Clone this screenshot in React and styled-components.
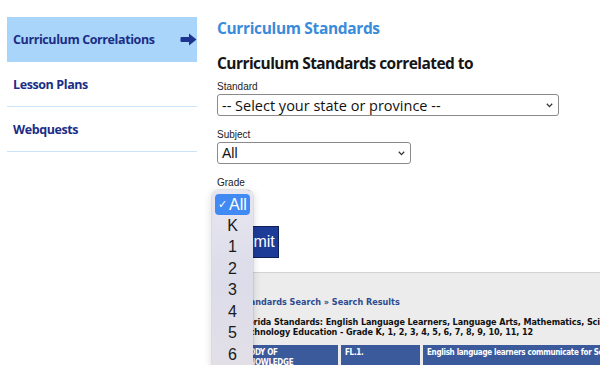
import React from 'react'
import styled, { createGlobalStyle } from 'styled-components'

const GlobalStyle = createGlobalStyle`
  html, body {
    margin: 0;
    padding: 0;
    background: #fff;
    overflow: hidden;
  }
  body {
    font-family: "Open Sans", "Liberation Sans", sans-serif;
    width: 600px;
    height: 365px;
  }
`

const Page = styled.div`
  display: flex;
  align-items: flex-start;
  width: 600px;
  height: 365px;
  overflow: hidden;
`

const Sidebar = styled.nav`
  width: 190px;
  flex: none;
  margin: 17px 0 0 7px;
  display: flex;
  flex-direction: column;
`

const NavItem = styled.a`
  display: flex;
  align-items: center;
  justify-content: space-between;
  height: ${p => (p.active ? '45px' : '44px')};
  padding: 0 0 0 6px;
  background: ${p => (p.active ? '#a9d5fb' : 'transparent')};
  border-bottom: ${p => (p.active ? 'none' : '1px solid #c8e3fa')};
  color: #1b2d86;
  font-weight: 700;
  font-size: 12.5px;
  letter-spacing: -0.4px;
  text-decoration: none;
  svg {
    flex: none;
  }
`

const Arrow = () => (
  <svg width="17" height="13" viewBox="0 0 17 13">
    <path d="M1.5 4 H9 V0.5 L16.5 6.5 L9 12.5 V9 H1.5 Q0.5 9 0.5 8 V5 Q0.5 4 1.5 4 Z" fill="#1b3590" />
  </svg>
)

const Main = styled.main`
  flex: none;
  width: 520px;
  margin-left: 20px;
  padding-top: 17px;
  display: flex;
  flex-direction: column;
`

const Title = styled.h1`
  margin: 0;
  color: #3a8bd9;
  font-size: 15.5px;
  letter-spacing: -0.35px;
  font-weight: 700;
  line-height: 22px;
`

const Subtitle = styled.h2`
  margin: 13px 0 0;
  color: #161616;
  font-size: 15.5px;
  letter-spacing: -0.55px;
  font-weight: 700;
  line-height: 22px;
`

const Field = styled.div`
  position: relative;
  display: flex;
  flex-direction: column;
  align-items: flex-start;
  margin-top: ${p => p.gap || 9}px;
`

const Label = styled.label`
  font-family: "Liberation Sans", Arial, sans-serif;
  font-size: 10px;
  line-height: 12px;
  color: #222;
  margin-bottom: 1px;
`

const SelectBox = styled.div`
  position: relative;
  width: ${p => p.width}px;
  height: 22px;
  box-sizing: border-box;
  border: 1px solid #8a8a8a;
  border-radius: 3px;
  background: #fff;
  display: flex;
  align-items: center;
  padding-left: 4px;
  font-family: ${p => (p.sans ? '"Liberation Sans", Arial' : '"Open Sans"')}, sans-serif;
  font-size: ${p => (p.sans ? '14px' : '14.5px')};
  color: #111;
  svg {
    position: absolute;
    right: 5px;
    top: 8px;
  }
`

const Chevron = () => (
  <svg width="7" height="5" viewBox="0 0 7 5">
    <path d="M0.8 0.8 L3.5 3.6 L6.2 0.8" fill="none" stroke="#333" strokeWidth="1.3" />
  </svg>
)

const Popup = styled.ul`
  position: absolute;
  left: -5px;
  top: 13px;
  width: 41px;
  height: 200px;
  margin: 0;
  padding: 4px 3px;
  box-sizing: border-box;
  list-style: none;
  border-radius: 6px;
  background: linear-gradient(180deg, #e7e6ef 0%, #dcdcea 45%, #e4e0e6 100%);
  box-shadow: 0 2px 8px rgba(0, 0, 0, 0.18), 0 0 0 0.5px rgba(0, 0, 0, 0.12);
  z-index: 5;
  font-family: "Liberation Sans", Arial, sans-serif;
  font-size: 16px;
  color: #1a1a1a;
`

const Option = styled.li`
  height: ${p => (p.selected ? '21px' : '21.5px')};
  display: flex;
  align-items: center;
  justify-content: center;
  border-radius: 4px;
  background: ${p => (p.selected ? '#418af3' : 'transparent')};
  color: ${p => (p.selected ? '#fff' : '#1a1a1a')};
  span {
    font-size: 11px;
    margin-right: 2px;
  }
`

const Submit = styled.button`
  margin-top: 14px;
  width: 61px;
  height: 32px;
  background: #1d3c98;
  border: 1px solid #0e1f5a;
  color: #fff;
  font-family: "Liberation Sans", Arial, sans-serif;
  font-size: 16px;
  align-self: flex-start;
  margin-left: 1px;
`

const Results = styled.section`
  margin-top: 14px;
  border-top: 1px solid #d3d3d3;
  background: #ececec;
  padding: 24px 0 0 23px;
  height: 200px;
  font-family: "DejaVu Sans Condensed", "DejaVu Sans", sans-serif;
  font-weight: 700;
`

const Crumb = styled.div`
  font-size: 9px;
  color: #2d4b8f;
  line-height: 11px;
`

const Heading = styled.div`
  margin-top: 9px;
  font-size: 9px;
  letter-spacing: -0.1px;
  line-height: 10px;
  color: #111;
  span {
    display: block;
    white-space: nowrap;
  }
`

const Table = styled.table`
  margin-top: 8px;
  margin-left: -3px;
  width: 640px;
  table-layout: fixed;
  border-spacing: 3px 0;
  font-size: 8px;
  letter-spacing: -0.3px;
  color: #fff;
`

const Cell = styled.td`
  box-sizing: border-box;
  width: ${p => (p.width ? `${p.width}px` : 'auto')};
  background: #3b5a9c;
  vertical-align: top;
  padding: 3px 4px;
  line-height: 10px;
`

export default function App() {
  const grades = ['K', '1', '2', '3', '4', '5', '6', '7', '8']
  return (
    <Page>
      <GlobalStyle />
      <Sidebar>
        <NavItem active href="#">
          Curriculum Correlations
          <Arrow />
        </NavItem>
        <NavItem href="#">Lesson Plans</NavItem>
        <NavItem href="#">Webquests</NavItem>
      </Sidebar>
      <Main>
        <Title>Curriculum Standards</Title>
        <Subtitle>Curriculum Standards correlated to</Subtitle>
        <Field gap={7}>
          <Label>Standard</Label>
          <SelectBox width={342}>
            -- Select your state or province --
            <Chevron />
          </SelectBox>
        </Field>
        <Field gap={13}>
          <Label>Subject</Label>
          <SelectBox width={194} sans>
            All
            <Chevron />
          </SelectBox>
        </Field>
        <Field gap={13}>
          <Label>Grade</Label>
          <SelectBox width={34} sans>
            All
            <Chevron />
          </SelectBox>
          <Popup>
            <Option selected>
              <span>✓</span>All
            </Option>
            {grades.map(g => (
              <Option key={g}>{g}</Option>
            ))}
          </Popup>
        </Field>
        <Submit>Submit</Submit>
        <Results>
          <Crumb>Standards Search » Search Results</Crumb>
          <Heading>
            <span>Florida Standards: English Language Learners, Language Arts, Mathematics, Science, Social Studies, and</span>
            <span>Technology Education - Grade K, 1, 2, 3, 4, 5, 6, 7, 8, 9, 10, 11, 12</span>
          </Heading>
          <Table>
            <tbody>
              <tr>
                <Cell width={98}>BODY OF<br />KNOWLEDGE</Cell>
                <Cell width={79}>FL.1.</Cell>
                <Cell>English language learners communicate for Social and Instructional purposes within the school setting</Cell>
              </tr>
            </tbody>
          </Table>
        </Results>
      </Main>
    </Page>
  )
}
